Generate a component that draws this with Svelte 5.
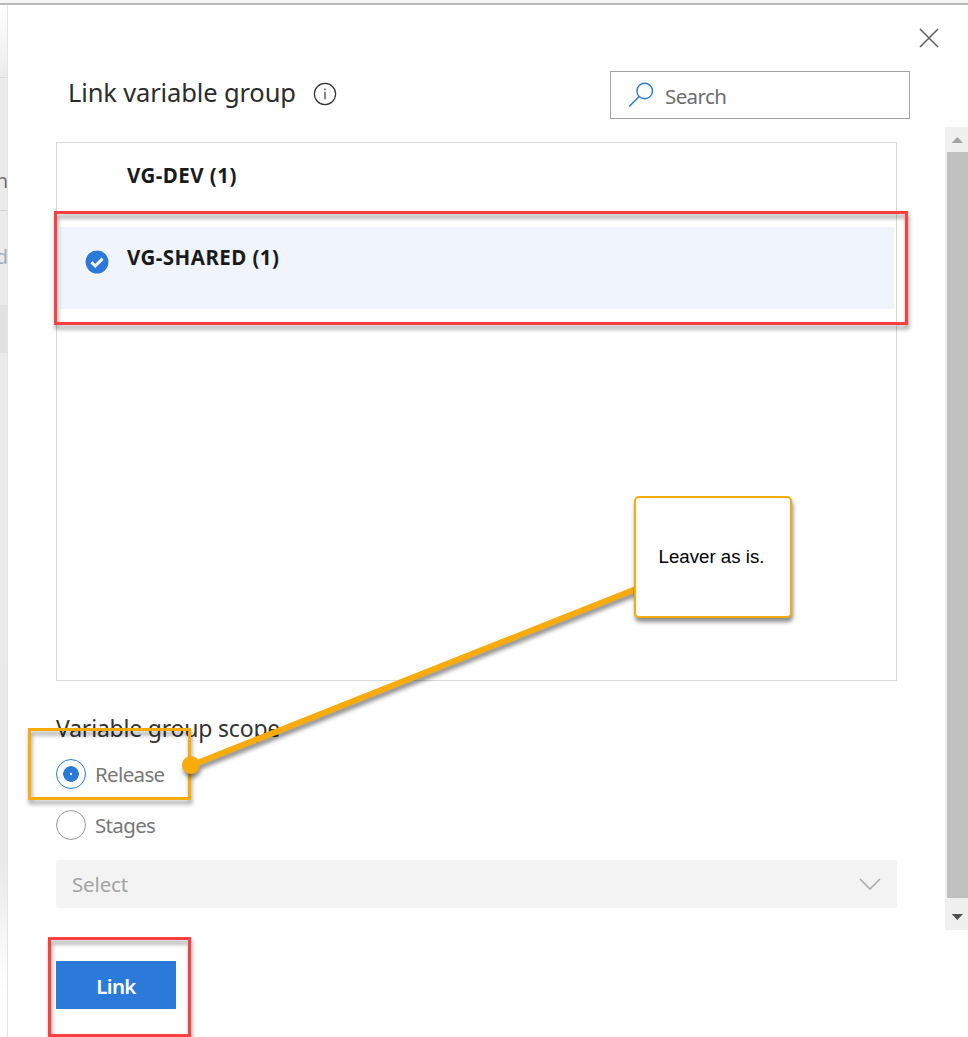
<script>
  let query = $state('');
  let scope = $state('Release');
  let selected = $state('VG-SHARED (1)');
  const groups = ['VG-DEV (1)', 'VG-SHARED (1)'];
  const scopes = ['Release', 'Stages'];
</script>

<div class="page">
  <div class="topbar"></div>
  <div class="main">
    <aside class="behind">
      <div class="cell first"></div>
      <div class="cell name"><span>n</span></div>
      <div class="cell link"><span>d</span></div>
      <div class="cell active"></div>
    </aside>

    <section class="panel">
      <div class="close-row">
        <button class="close" aria-label="Close">
          <svg width="20" height="20" viewBox="0 0 20 20"><path d="M1 1 19 19M19 1 1 19" fill="none" stroke="#5c5c5c" stroke-width="1.5" /></svg>
        </button>
      </div>

      <header>
        <h1><span>Link variable group</span></h1>
        <svg class="info" width="24" height="24" viewBox="0 0 24 24">
          <circle cx="12" cy="12" r="10.6" fill="none" stroke="#333" stroke-width="1.2" />
          <path d="M12 9.8v7.4M12 6.5v1.7" stroke="#444" stroke-width="1.3" />
        </svg>
        <label class="search">
          <svg width="26" height="26" viewBox="0 0 26 26">
            <circle cx="16.7" cy="9" r="7.8" fill="none" stroke="#2b79d8" stroke-width="1.4" />
            <path d="M11.2 14.5 1.2 24.5" stroke="#2b79d8" stroke-width="1.5" />
          </svg>
          <input bind:value={query} placeholder="Search" />
        </label>
      </header>

      <div class="body">
        <div class="content">
          <div class="list">
            {#each groups as group}
              <button class="row" class:selected={group === selected} onclick={() => (selected = group)}>
                <span class="mark">
                  {#if group === selected}
                    <svg width="26" height="26" viewBox="0 0 26 26">
                      <circle cx="13" cy="13" r="12.7" fill="#fff" />
                      <circle cx="13" cy="13" r="11.5" fill="#2b79d8" />
                      <path d="M7.4 13.3 11.2 17 18.6 9.6" fill="none" stroke="#fff" stroke-width="2.9" />
                    </svg>
                  {/if}
                </span>
                <span class="label">{group}</span>
              </button>
            {/each}
          </div>

          <h2><span>Variable group scope</span></h2>
          {#each scopes as item}
            <button class="radio" onclick={() => (scope = item)}>
              <span class="dot" class:on={scope === item}></span>
              <span class="text">{item}</span>
            </button>
          {/each}
          <div class="select">
            <span>Select</span>
            <svg width="22" height="12" viewBox="0 0 22 12"><path d="M1 1 11 11 21 1" fill="none" stroke="#a6a6a6" stroke-width="1.5" /></svg>
          </div>
        </div>

        <div class="scrollbar">
          <svg width="23" height="25" viewBox="0 0 23 25"><path d="M6.8 16 12.3 10 18 16Z" fill="#a3a3a3" /></svg>
          <div class="thumb"></div>
          <svg width="23" height="32" viewBox="0 0 23 32"><path d="M6.8 16 12.3 22 18 16Z" fill="#505050" /></svg>
        </div>
      </div>

      <footer><button class="primary"><span>Link</span></button></footer>
    </section>
  </div>

  <div class="frame red group-frame"></div>
  <div class="frame amber scope-frame"></div>
  <div class="frame red link-frame"></div>
  <svg class="pointer" width="968" height="1037" viewBox="0 0 968 1037">
    <path d="M191 765.5 636 589" stroke="#f9ab0b" stroke-width="6" />
    <circle cx="191" cy="765" r="9" fill="#f9ab0b" />
  </svg>
  <div class="note"><span>Leaver as is.</span></div>
</div>

<style>
  :global(body) { margin: 0; background: #fff; }
  .page { position: relative; width: 968px; height: 1037px; overflow: hidden; display: flex; flex-direction: column; background: #fff; font-family: "Noto Sans", "Open Sans", sans-serif; box-sizing: border-box; }
  .page * { box-sizing: border-box; }
  button { border: 0; padding: 0; margin: 0; background: none; font: inherit; text-align: left; }
  svg { display: block; flex: none; }
  span { white-space: nowrap; }
  .topbar { height: 5px; flex: none; background: #f4f4f4; border-bottom: 2px solid #bababa; }
  .main { flex: 1; display: flex; min-height: 0; }

  .behind { width: 8px; flex: none; overflow: hidden; border-right: 1px solid #e4e4e4; background: linear-gradient(#fff 0, #ebebeb 75px, #eaeaea 860px, #fff 985px); }
  .cell { display: flex; justify-content: flex-end; align-items: center; font-size: 20px; }
  .first { height: 73px; border-bottom: 1px solid #ddd; }
  .cell span { margin-right: -1px; }
  .name { height: 133px; padding-top: 73px; border-bottom: 1px solid #d2d2d2; color: #737373; }
  .link { height: 94px; padding-bottom: 3px; color: #a3adb5; }
  .active { height: 48px; background: #e2e2e2; }

  .panel { flex: 1; min-width: 0; display: flex; flex-direction: column; background: #fff; }
  .close-row { height: 66px; display: flex; justify-content: flex-end; padding: 23px 29px 0 0; }
  .close { height: 20px; }
  header { height: 56px; padding: 0 58px 8px 60px; display: flex; align-items: center; }
  h1 { margin: 0 0 6px; width: 245px; font-size: 25.5px; line-height: 36px; font-weight: 400; color: #2c2c2c; }
  h1 span { letter-spacing: -0.14px; }
  .info { margin-top: -2px; }
  .search { margin-left: auto; width: 300px; height: 48px; border: 1px solid #a3a3a3; display: flex; align-items: center; padding-left: 17px; gap: 11px; }
  .search svg { margin-top: -1px; }
  input { border: 0; outline: 0; width: 220px; padding: 2px 0 0; font: 20.5px "Noto Sans", sans-serif; letter-spacing: -0.6px; background: none; color: #333; }
  input::placeholder { color: #6c6c6c; opacity: 1; }

  .body { height: 803px; display: flex; }
  .content { flex: 1; padding: 15px 48px 0; }
  .list { height: 539px; border: 1px solid #d8d8d8; padding: 2px 2px 0 3px; display: flex; flex-direction: column; }
  .row { height: 82px; display: flex; align-items: flex-start; padding-left: 24px; color: #1b1b1b; }
  .row.selected { background: #f0f5fd; }
  .mark { width: 43px; padding-top: 22px; }
  .label { padding-top: 15px; font-size: 20.5px; line-height: 30px; font-weight: 700; letter-spacing: 0.45px; }
  h2 { margin: 31px 0 14px; height: 33px; font-size: 23px; line-height: 33px; font-weight: 400; color: #333; }
  h2 span { letter-spacing: -0.2px; }
  .radio { display: flex; align-items: center; gap: 9px; height: 30px; margin-bottom: 21px; font-size: 20.5px; color: #777; }
  .text { letter-spacing: -0.65px; }
  .dot { width: 30px; height: 30px; border: 1px solid #999; border-radius: 50%; }
  .dot.on { border-color: #2b79d8; background: radial-gradient(circle, #fff 0 0.7px, #2b79d8 0.9px 7.5px, #fff 8.1px); }
  .select { margin-top: -1px; height: 48px; border-radius: 3px; background: #f3f3f3; color: #a3a3a3; display: flex; align-items: center; justify-content: space-between; padding: 0 16px; font-size: 20.5px; letter-spacing: -0.15px; }

  .scrollbar { width: 23px; background: #f0f0f0; display: flex; flex-direction: column; }
  .thumb { flex: 1; margin-left: 2px; background: #c0c0c0; }
  footer { padding: 31px 48px 0; }
  .primary { width: 120px; height: 48px; padding-top: 1px; background: #2b79d8; color: #fff; font-size: 20.5px; font-weight: 600; text-align: center; letter-spacing: -0.7px; }

  .frame { position: absolute; border: 3px solid; filter: drop-shadow(1px 4px 2px rgba(0, 0, 0, 0.4)); }
  .red { border-color: #fc4040; }
  .amber { border-color: #f9ab0b; }
  .group-frame { left: 54px; top: 211px; width: 854px; height: 114px; }
  .scope-frame { left: 28px; top: 728px; width: 163px; height: 72px; }
  .link-frame { left: 48px; top: 937px; width: 143px; height: 100px; }
  .pointer { position: absolute; left: 0; top: 0; pointer-events: none; filter: drop-shadow(1px 4px 2px rgba(0, 0, 0, 0.45)); }
  .note { position: absolute; left: 634px; top: 496px; width: 158px; height: 122px; border: 2px solid #f9ab0b; border-radius: 5px; background: #fff; display: flex; align-items: center; justify-content: center; padding-right: 3px; font: 18.7px "Liberation Sans", Arial, sans-serif; color: #000; box-shadow: 1px 4px 4px rgba(0, 0, 0, 0.45); }
</style>
